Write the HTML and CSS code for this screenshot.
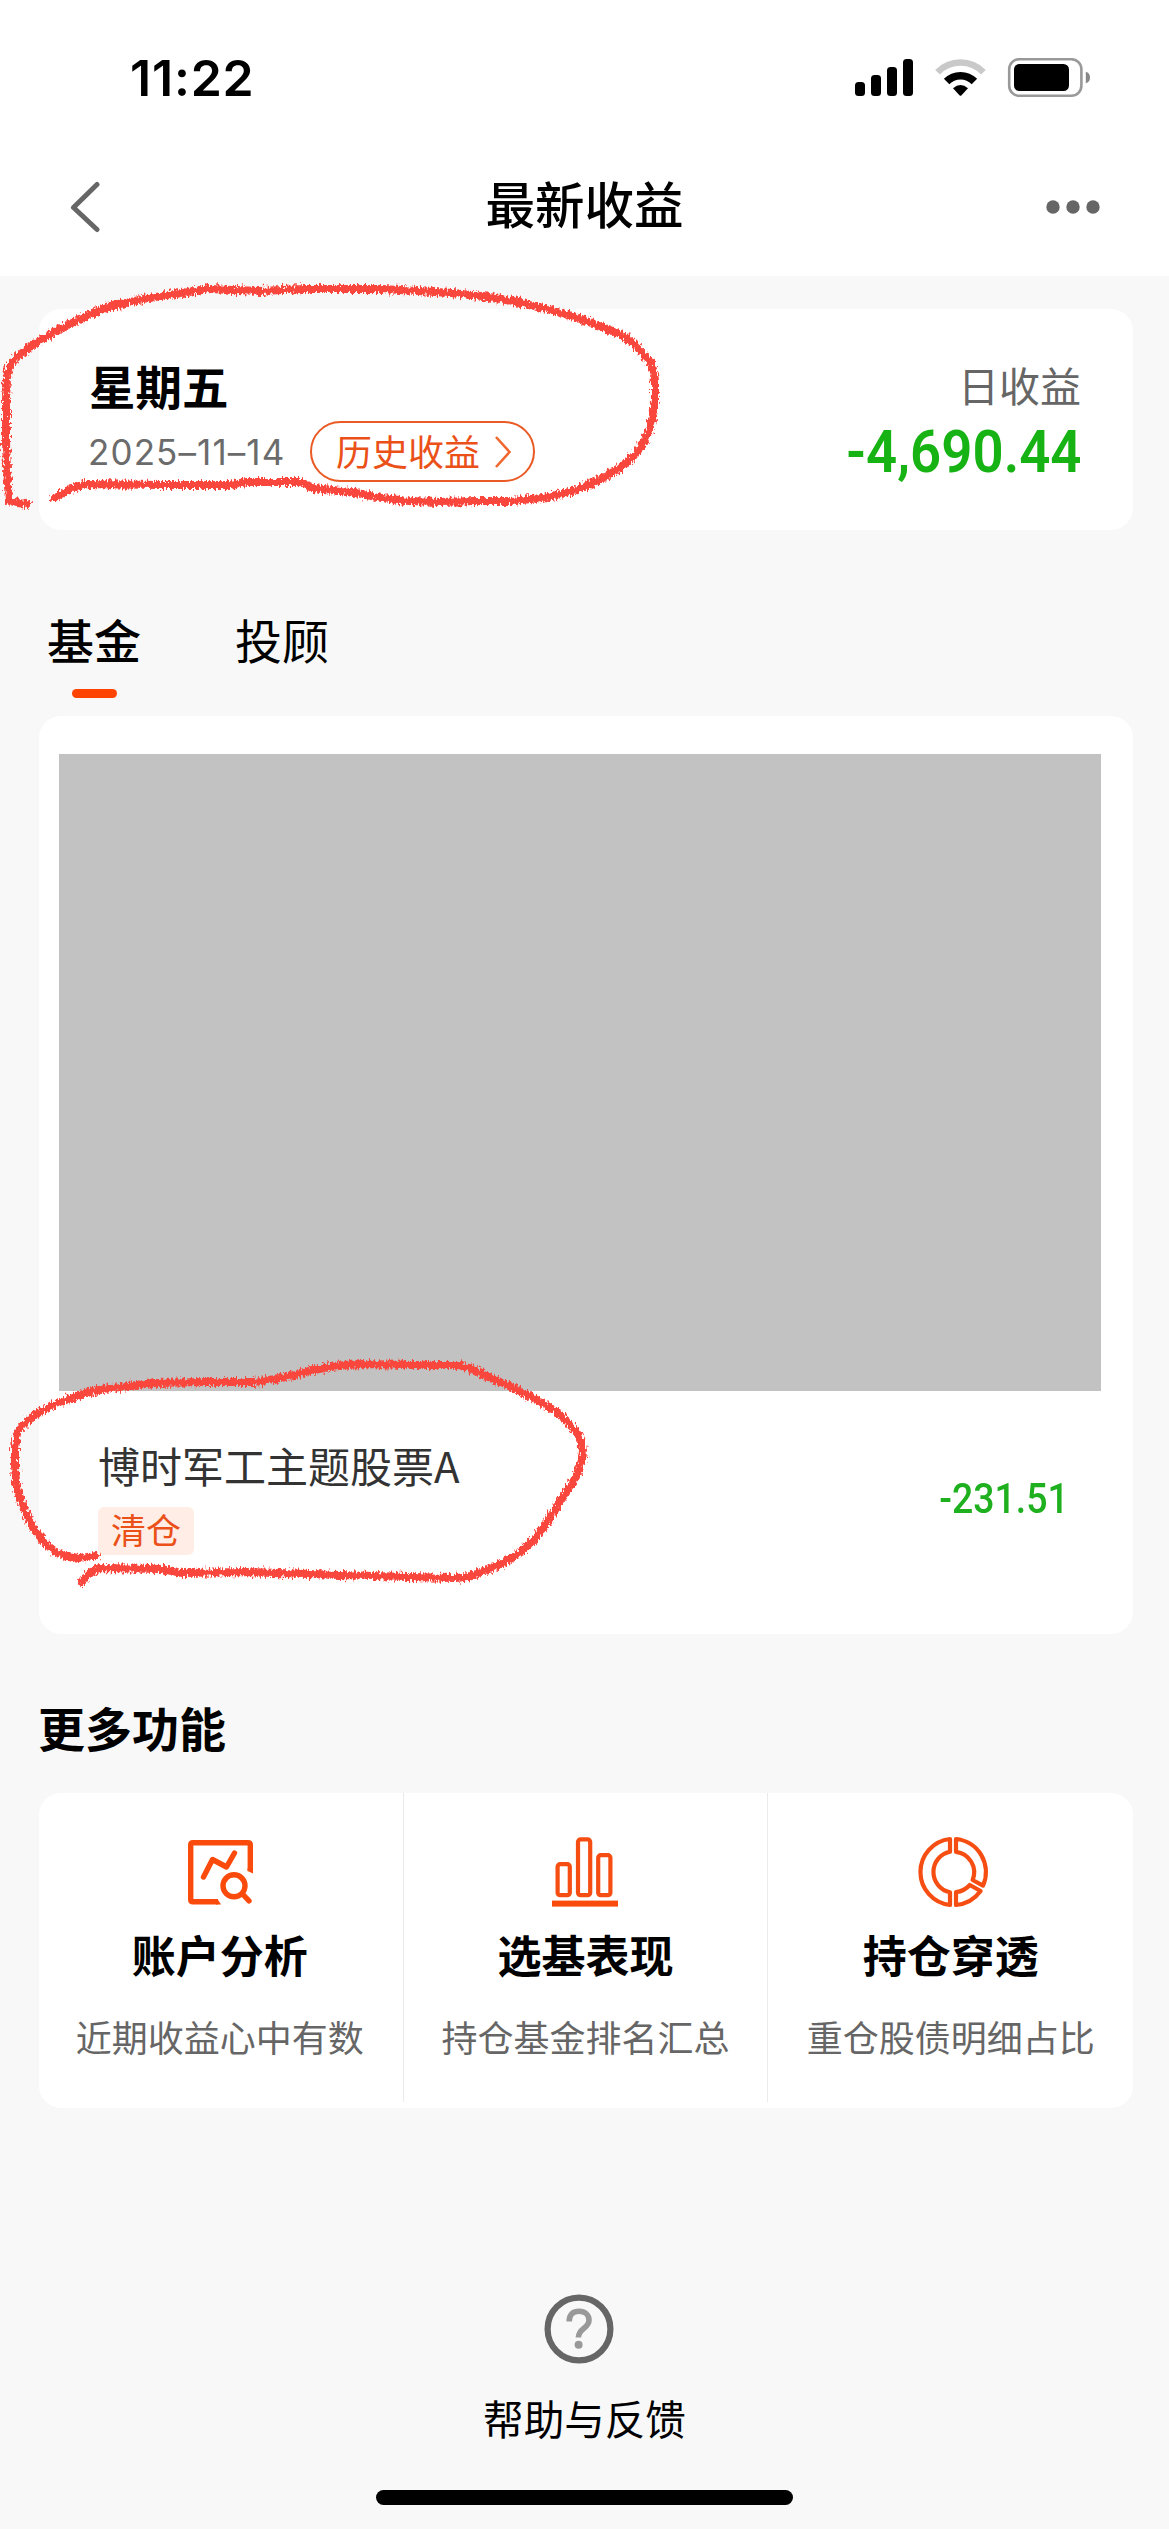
FILE: index.html
```html
<!DOCTYPE html>
<html lang="zh-CN">
<head>
<meta charset="utf-8">
<title>最新收益</title>
<link rel="stylesheet" href="styles.css">
</head>
<body>
<div class="screen">
  <header class="top">
    <div class="status">
      <span class="time">11:22</span>
      <svg class="status-icons" width="238" height="40" viewBox="854 58 238 40">
        <rect x="855" y="82" width="10" height="14" rx="3.5"/>
        <rect x="871" y="75" width="10" height="21" rx="3.5"/>
        <rect x="887" y="67" width="10" height="29" rx="3.5"/>
        <rect x="903" y="59" width="10" height="37" rx="3.5"/>
        <path d="M937.6 72.2A32 32 0 0 1 983.4 72.2" fill="none" stroke="#c9c9c9" stroke-width="6.6"/>
        <path d="M946.6 81.5A19.5 19.5 0 0 1 974.4 81.5" fill="none" stroke="#000" stroke-width="7.6"/>
        <path d="M953 88.3Q960.5 81.5 968 88.3L961.3 95.4Q960.5 96.2 959.7 95.4Z"/>
        <rect x="1009.2" y="59.2" width="72.2" height="36.6" rx="10" fill="none" stroke="#999" stroke-width="2.6"/>
        <rect x="1014" y="64" width="55" height="27" rx="5.5"/>
        <path d="M1085.8 71.8Q1090 73 1090 77.5T1085.8 83.2Z" fill="#888"/>
      </svg>
    </div>
    <nav class="nav">
      <svg class="back" width="32" height="54" viewBox="0 0 32 54"><path d="M27 4.5L3.5 27.5L27 49.5" fill="none" stroke="#666" stroke-width="5" stroke-linecap="round" stroke-linejoin="round"/></svg>
      <h1 class="title">最新收益</h1>
      <svg class="more" width="54" height="14" viewBox="0 0 54 14" fill="#666"><circle cx="7" cy="7" r="6.7"/><circle cx="27" cy="7" r="6.7"/><circle cx="47" cy="7" r="6.7"/></svg>
    </nav>
  </header>

  <main class="content">
    <section class="card summary">
      <div>
        <div class="weekday">星期五</div>
        <div class="date-row">
          <span class="date">2025–11–14</span>
          <a class="history">历史收益<svg width="18" height="34" viewBox="0 0 18 34"><path d="M2 2L15.5 17L2 32" fill="none" stroke="#f0672f" stroke-width="2.6"/></svg></a>
        </div>
      </div>
      <div class="daily">
        <div class="daily-label">日收益</div>
        <div class="daily-value">-4,690.44</div>
      </div>
    </section>

    <div class="tabs">
      <span class="tab active">基金</span>
      <span class="tab">投顾</span>
    </div>

    <section class="card funds">
      <div class="masked"></div>
      <div class="fund">
        <div>
          <div class="fund-name">博时军工主题股票A</div>
          <span class="tag">清仓</span>
        </div>
        <span class="fund-value">-231.51</span>
      </div>
    </section>

    <h2 class="section-title">更多功能</h2>
    <section class="card tools">
      <div class="tool">
        <svg width="70" height="70" viewBox="0 0 70 70" fill="none" stroke="#fa4b0c" stroke-width="5.4">
          <path d="M65.3 34V8Q65.3 5.7 63 5.7H8Q5.7 5.7 5.7 8V62.5Q5.7 64.8 8 64.8H33" />
          <path d="M62.6 31V34L68 36.5V31ZM31 67.5H36L32.5 62.1H31Z" fill="#fa4b0c" stroke="none"/>
          <path d="M18.5 40L27.5 22.5L41.5 30L49.5 16" stroke-linecap="round" stroke-linejoin="round"/>
          <circle cx="49" cy="48.8" r="11"/>
          <path d="M57.5 57L64 63.8" stroke-linecap="round"/>
        </svg>
        <div class="tool-name">账户分析</div>
        <div class="tool-desc">近期收益心中有数</div>
      </div>
      <div class="tool">
        <svg width="70" height="70" viewBox="0 0 70 70" fill="none" stroke="#f64e12" stroke-width="4.2">
          <rect x="7.6" y="27.2" width="12.2" height="31" rx="2.5"/>
          <rect x="28" y="2.4" width="12.2" height="55.8" rx="2.5"/>
          <rect x="48.2" y="18.2" width="12.2" height="40" rx="2.5"/>
          <rect x="2" y="63.6" width="66" height="6" fill="#fa4b0c" stroke="none"/>
        </svg>
        <div class="tool-name">选基表现</div>
        <div class="tool-desc">持仓基金排名汇总</div>
      </div>
      <div class="tool">
        <svg class="ring" width="76" height="72" viewBox="-2 0 76 72" fill="none" stroke="#f64e12" stroke-width="4.2" stroke-linejoin="round">
          <path d="M33 3A33.2 33.2 0 0 0 33 69V56.2A20.6 20.6 0 0 1 33 15.8Z"/>
          <path d="M39 3A33.2 33.2 0 0 1 66 49.6L55.6 44A20.6 20.6 0 0 0 39 15.8Z"/>
          <path d="M39 69V56.2Q47.5 55 52.8 49L63.6 55Q54.5 67.5 39 69Z"/>
        </svg>
        <div class="tool-name">持仓穿透</div>
        <div class="tool-desc">重仓股债明细占比</div>
      </div>
    </section>
  </main>

  <footer class="help">
    <svg class="help-icon" width="70" height="70" viewBox="0 0 70 70" fill="none">
      <circle cx="35" cy="35" r="31.4" stroke="#666" stroke-width="6.2"/>
      <path d="M25.2 27.5C25.2 20.5 29 17.3 35 17.3C41 17.3 45 21 45 26.2C45 34.5 34.4 34 34.4 43.5" stroke="#999" stroke-width="5.6"/>
      <circle cx="34.6" cy="50.8" r="4" fill="#999"/>
    </svg>
    <div class="help-text">帮助与反馈</div>
    <div class="home-bar"></div>
  </footer>

  <svg class="marks" width="1169" height="2529" viewBox="0 0 1169 2529">
    <defs>
      <filter id="crayon" x="-5%" y="-10%" width="110%" height="120%">
        <feTurbulence type="fractalNoise" baseFrequency="0.55 0.22" numOctaves="2" seed="4"/>
        <feDisplacementMap in="SourceGraphic" scale="9" xChannelSelector="R" yChannelSelector="G"/>
      </filter>
    </defs>
    <g fill="none" stroke="#f9463d" stroke-width="8" stroke-linecap="round" stroke-linejoin="round" filter="url(#crayon)">
      <polyline points="27,504 18,503 9,501 7,470 6,442 6,400 7,377 10,366 17,357 27,349 39,341 56,331 74,322 90,314 108,307 125,303 143,299 175,294 208,289 235,290 260,291 304,289 345,289 382,289 418,291 451,293 482,296 512,301 543,308 572,316 600,326 624,336 639,349 650,362 654,373 655,383 655,400 653,417 648,433 641,447 631,459 619,468 601,479 581,488 562,494 542,498 510,501 477,501 440,502 408,501 382,498 356,493 333,490 312,488 301,482 247,482 230,485 160,485 87,484 72,488 62,494 54,498"/>
      <polyline points="95,1556 79,1558 67,1556 57,1553 46,1544 36,1532 27,1516 20,1498 16,1482 15,1467 15,1448 17,1432 27,1421 40,1412 55,1404 71,1398 86,1393 103,1389 128,1386 154,1383 205,1382 253,1382 269,1380 285,1377 305,1372 324,1368 344,1365 364,1364 412,1365 459,1365 469,1368 478,1372 498,1381 518,1390 537,1400 554,1410 567,1421 577,1433 581,1442 583,1450 582,1460 579,1470 571,1485 561,1500 548,1521 534,1540 525,1549 514,1557 497,1566 478,1573 467,1577 455,1578 407,1577 340,1575 245,1572 182,1573 162,1569 99,1568 89,1573 82,1582"/>
    </g>
  </svg>
</div>
</body>
</html>
```
FILE: styles.css
```css
* { box-sizing: border-box; }

body {
  margin: 0;
  background: #f8f8f8;
  font-family: "Noto Sans CJK SC", sans-serif;
  color: #000;
}

svg { display: block; flex: none; }

.screen {
  position: relative;
  width: 1169px;
  height: 2529px;
  overflow: hidden;
  background: #f8f8f8;
}

.top { height: 276px; background: #fff; }

.status {
  display: flex;
  align-items: center;
  justify-content: space-between;
  height: 155px;
  padding: 0 77px 0 130px;
}

.time {
  font: 600 50px/60px Inter, sans-serif;
  letter-spacing: 0.8px;
}

.nav {
  display: flex;
  align-items: center;
  justify-content: space-between;
  height: 103px;
  padding: 0 69px 0 70px;
}

.title {
  margin: 0 0 8px 21px;
  font-size: 49.5px;
  line-height: 60px;
  font-weight: 500;
}

.content { padding: 33px 36px 0 39px; }

.card { background: #fff; border-radius: 22px; }

.summary {
  display: flex;
  justify-content: space-between;
  height: 221px;
  padding: 46px 52px 0 50px;
}

.weekday { font-size: 46.5px; line-height: 60px; font-weight: 700; }

.date-row { display: flex; align-items: center; margin-top: 6px; }

.date {
  width: 221px;
  color: #6b6b6b;
  font: 400 35px/60px Inter, sans-serif;
  letter-spacing: 1.1px;
  text-indent: -1px;
}

.history {
  display: flex;
  align-items: center;
  gap: 14px;
  height: 61px;
  padding: 0 21px 3px 24px;
  border: 2px solid #ea5a24;
  border-radius: 31px;
  color: #ea5018;
  font-size: 36px;
  line-height: 50px;
}

.history svg { position: relative; top: 2px; }

.daily { text-align: right; }

.daily-label { color: #666; font-size: 41px; line-height: 59px; }

.daily-value {
  margin-top: 8px;
  color: #17b314;
  font: 600 59px/60px Roboto, sans-serif;
  transform: scaleX(0.925);
  transform-origin: right;
}

.tabs { display: flex; gap: 94px; margin-top: 82px; padding-left: 8px; height: 104px; }

.tab { font-size: 47px; line-height: 54px; }

.tab.active { font-weight: 500; }

.tab.active::after {
  content: "";
  display: block;
  width: 45px;
  height: 9px;
  margin: 23px auto 0;
  border-radius: 5px;
  background: #ff4400;
}

.funds { height: 918px; padding-top: 38px; }

.masked { height: 637px; margin: 0 32px 0 20px; background: #c2c2c2; }

.fund {
  display: flex;
  align-items: center;
  justify-content: space-between;
  margin-top: 49px;
  padding: 0 64px 0 59px;
}

.fund-name { color: #333; font-size: 42px; line-height: 50px; }

.tag {
  display: block;
  width: 96px;
  height: 48px;
  margin-top: 17px;
  border-radius: 6px;
  background: #ffede6;
  color: #ea5018;
  font-size: 35px;
  line-height: 44px;
  text-align: center;
}

.fund-value {
  color: #1fb01f;
  font: 500 43px/50px Roboto, sans-serif;
  transform: scaleX(0.87);
  transform-origin: right;
}

.section-title {
  margin: 63px 0 36px -1px;
  font-size: 47px;
  line-height: 60px;
  font-weight: 700;
}

.tools {
  display: grid;
  grid-template-columns: 1fr 1fr 1fr;
  height: 315px;
  padding-bottom: 6px;
}

.tool {
  display: flex;
  flex-direction: column;
  align-items: center;
  padding-top: 44px;
  border-right: 1.5px solid #ebebeb;
}

.tool:first-child { padding-right: 2px; }

.tool:last-child { border-right: 0; }

.ring { margin: -1px 0; transform: translateX(2px); }

.tool-name { margin-top: 22px; font-size: 44px; line-height: 50px; font-weight: 700; }

.tool-desc { margin-top: 37px; color: #666; font-size: 36px; line-height: 40px; }

.help {
  display: flex;
  flex-direction: column;
  align-items: center;
  padding-top: 186px;
}

.help-icon { margin-right: 12px; }

.help-text { margin-top: 29px; font-size: 40.6px; line-height: 50px; }

.home-bar { width: 417px; height: 15px; margin-top: 47px; border-radius: 8px; background: #000; }

/* Hand-drawn circles lie over the whole screen */
.marks { position: absolute; left: 0; top: 0; pointer-events: none; }
```
